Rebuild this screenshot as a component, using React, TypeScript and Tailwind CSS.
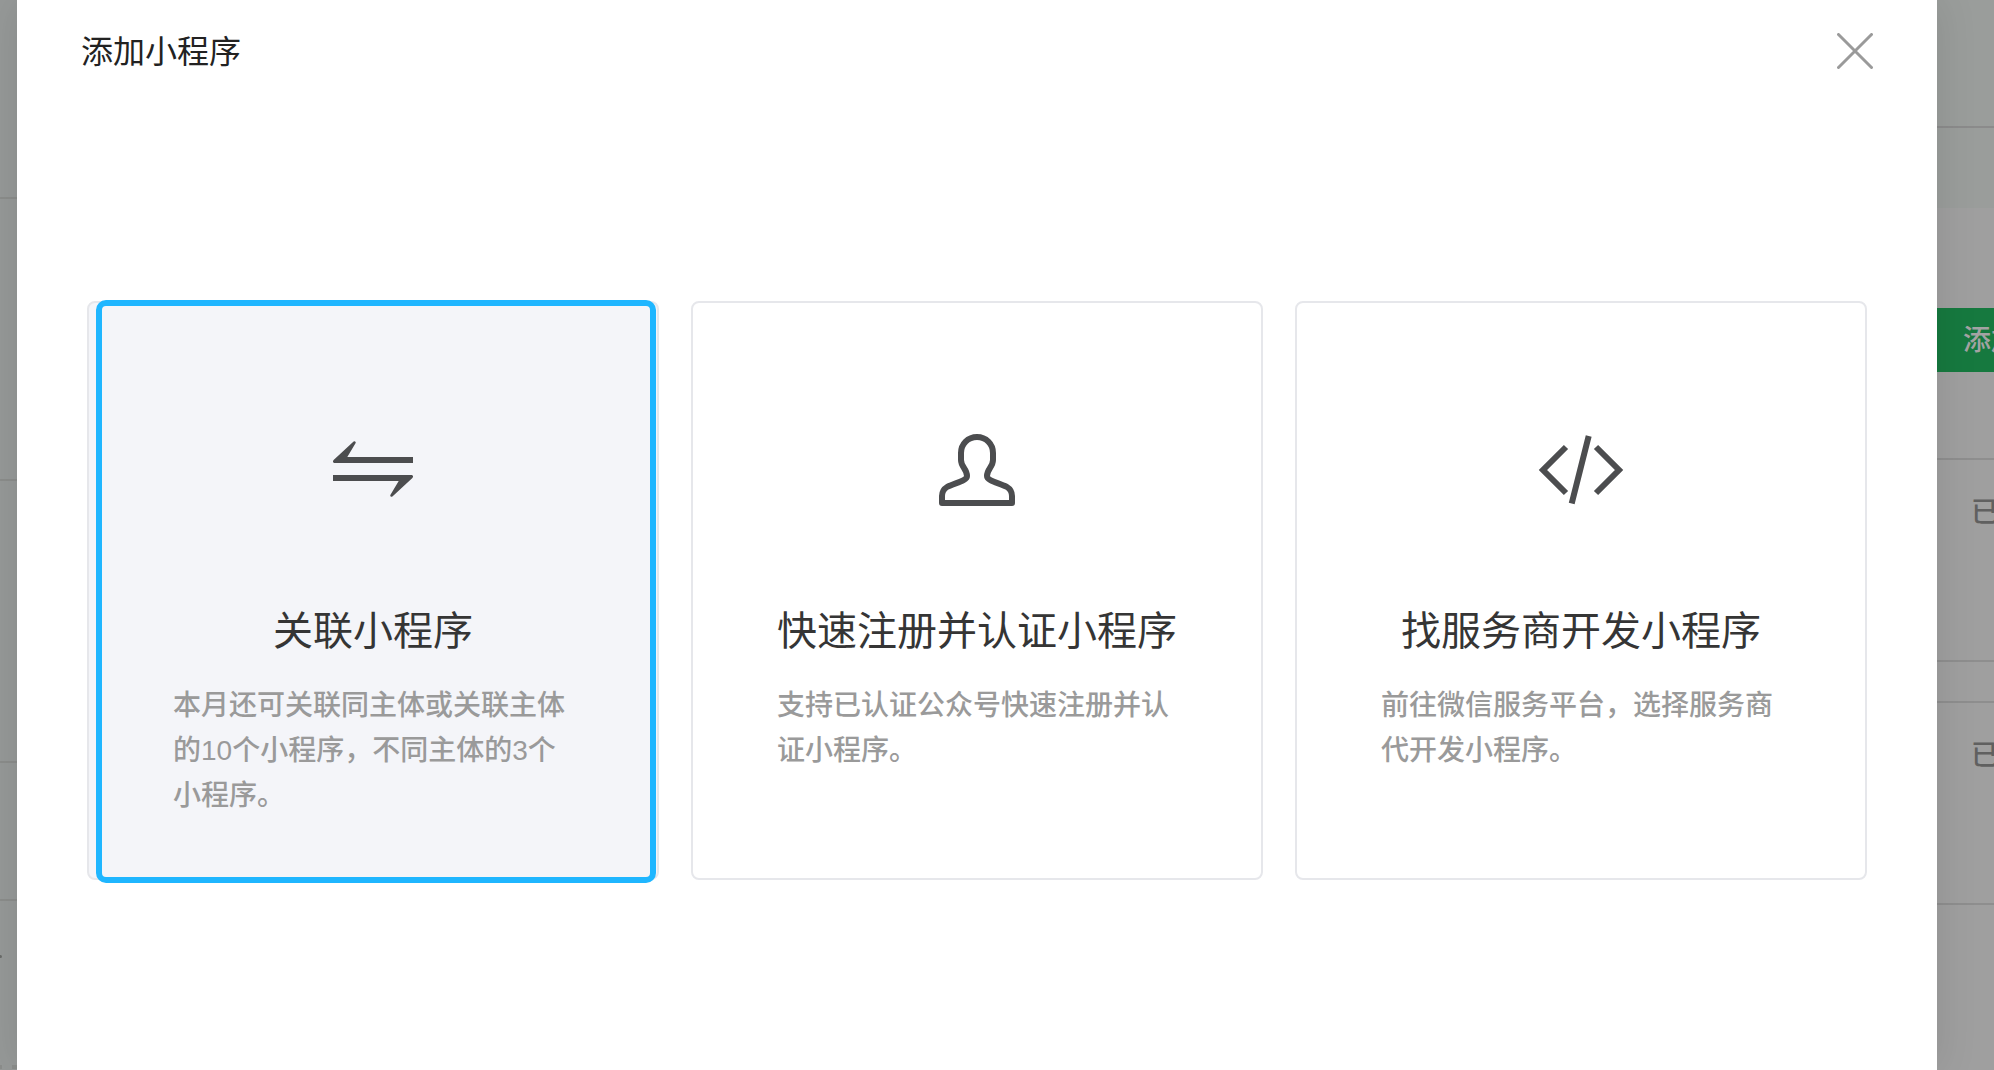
import type { ReactNode } from "react";

interface Option {
    title: string;
    desc: string;
    icon: ReactNode;
    selected?: boolean;
}

const options: Option[] = [
    {
        title: "关联小程序",
        desc: "本月还可关联同主体或关联主体的10个小程序，不同主体的3个小程序。",
        selected: true,
        icon: (
            <g fill="currentColor" stroke="none">
                <path d="M8.6 38 L28.6 19.5 Q30.6 18.6 30.8 20.8 L22.3 35 H88 V41 H9.2 Q7 40 8.6 38 Z" />
                <path d="M87.4 56 L67.4 74.5 Q65.4 75.4 65.2 73.2 L73.7 59 H8 V53 H86.8 Q89 54 87.4 56 Z" />
            </g>
        ),
    },
    {
        title: "快速注册并认证小程序",
        desc: "支持已认证公众号快速注册并认证小程序。",
        icon: (
            <path
                strokeLinejoin="round"
                d="M48 15 C39 15 32 22 32 31 V38 C32 45 38 47 38 54 C38 59 25 61 18 65 Q13 68 13 74 V81 H83 V74 Q83 68 78 65 C71 61 58 59 58 54 C58 47 64 45 64 38 V31 C64 22 57 15 48 15 Z"
            />
        ),
    },
    {
        title: "找服务商开发小程序",
        desc: "前往微信服务平台，选择服务商代开发小程序。",
        icon: <path d="M33 25 L10 48 L33 71 M63 25 L86 48 L63 71 M55.7 14 L38.7 81.5" />,
    },
];

function OptionCard({ title, desc, icon, selected }: Option) {
    return (
        <button
            type="button"
            className={
                selected
                    ? "relative flex h-[579px] flex-1 flex-col items-center rounded-lg border-2 border-[#e6e7eb] bg-[#f4f5f9] px-[84px] pt-[119px]"
                    : "relative flex h-[579px] flex-1 flex-col items-center rounded-lg border-2 border-[#e6e7eb] bg-white px-[84px] pt-[119px]"
            }
        >
            <svg viewBox="0 0 96 96" className="size-24 text-[#4c4d4f]" fill="none" stroke="currentColor" strokeWidth="6" aria-hidden="true">
                {icon}
            </svg>
            <span className="mt-[83px] text-[40px] leading-[60px] whitespace-nowrap text-[#353535]">{title}</span>
            <span className="mt-[22px] w-full text-left text-[28px] leading-[45px] font-medium text-[#9a9a9a]">{desc}</span>
            {/* Selection frame */}
            {selected && (
                <span className="pointer-events-none absolute -top-[3px] right-[1px] -bottom-[5px] left-[7px] rounded-[10px] border-6 border-[#1fb6ff]" />
            )}
        </button>
    );
}

export default function App() {
    return (
        <div className="flex min-h-screen overflow-hidden font-['Liberation_Sans','Noto_Sans_CJK_SC',sans-serif]">
            {/* Dimmed side menu */}
            <aside className="flex w-[17px] flex-none flex-col overflow-hidden bg-[#969998]">
                <div className="h-[199px] border-b-2 border-[#8b8d8b]" />
                <div className="h-[282px] border-b-2 border-[#8b8d8b]" />
                <div className="h-[282px] border-b-2 border-[#8b8d8b]" />
                <div className="h-[138px] border-b-2 border-[#8b8d8b]" />
                <div className="mt-[54px] h-[3px] w-[2px] rounded-r-full bg-[#6a6c6a]" />
                <div className="mt-[107px] flex h-1 justify-between">
                    <div className="w-[2px] bg-[#8b8d8b]" />
                    <div className="w-[5px] bg-[#8b8d8b]" />
                </div>
            </aside>

            <section
                role="dialog"
                aria-labelledby="dialog-title"
                className="relative z-10 min-w-0 flex-1 bg-white shadow-[0_0_40px_rgba(0,0,0,0.1)]"
            >
                <header className="flex h-[102px] items-center justify-between px-16">
                    <h1 id="dialog-title" className="pt-[2px] text-[32px] leading-[48px] text-[#222222]">添加小程序</h1>
                    <button type="button" aria-label="关闭" className="text-[#9a9a9a]">
                        <svg viewBox="0 0 36 36" className="size-9" fill="none" stroke="currentColor" strokeWidth="3" strokeLinecap="round">
                            <path d="M1.5 1.5 L34.5 34.5 M34.5 1.5 L1.5 34.5" />
                        </svg>
                    </button>
                </header>
                <div className="flex gap-8 px-[70px] pt-[199px]">
                    {options.map((option) => (
                        <OptionCard key={option.title} {...option} />
                    ))}
                </div>
            </section>

            {/* Dimmed page content */}
            <main className="w-[57px] flex-none overflow-hidden bg-[#9f9f9f] text-[28px] leading-[42px] font-medium whitespace-nowrap">
                <div className="h-32 border-b-2 border-[#8b8b8b] bg-[#9a9d9b]" />
                <div className="h-20 bg-[#9a9d9b]" />
                <button type="button" className="mt-[100px] h-16 w-40 bg-[#16793f] pt-[2px] pl-[26px] text-left text-[#a3a3a3]">
                    添加
                </button>
                <div className="mt-[86px] h-[204px] border-y-2 border-[#8e8e8e] pt-8 pl-[34px] text-[#606060]">已关联</div>
                <div className="mt-[39px] h-[204px] border-y-2 border-[#8e8e8e] pt-8 pl-[34px] text-[#606060]">已关联</div>
            </main>
        </div>
    );
}
